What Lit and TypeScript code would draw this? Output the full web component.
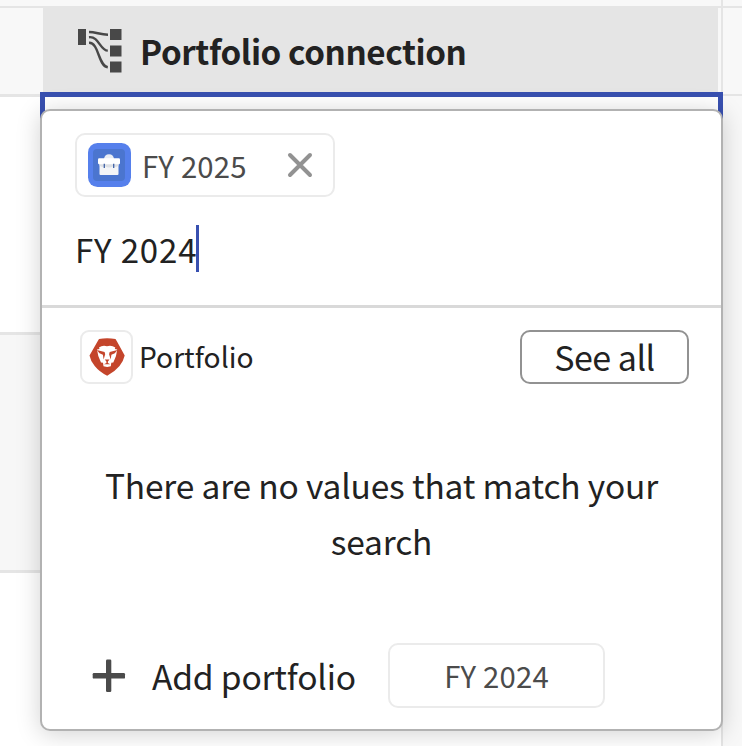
import { LitElement, html, css, svg } from "lit";
import { customElement, property } from "lit/decorators.js";

const connectionIcon = svg`
  <rect x="0" y="1" width="8" height="16"/>
  <rect x="32" y="1" width="11.5" height="11"/>
  <rect x="32" y="17.5" width="11.5" height="11"/>
  <rect x="32" y="33.500" width="11.5" height="11"/>
  <g fill="none" stroke="currentColor" stroke-width="2.4">
    <path d="M11 4C18 4 22 6.7 30 6.7"/>
    <path d="M11 9.2C21 8 22 22.6 29.8 22.6"/>
    <path d="M11 14.8C21 14.3 20 38 29.8 39.3"/>
  </g>`;

@customElement("value-chip")
export class ValueChip extends LitElement {
  @property() label = "";
  @property({ type: Boolean }) removable = false;

  static styles = css`
    :host {
      display: flex;
      box-sizing: border-box;
      align-items: center;
      justify-content: center;
      width: 217px;
      height: 65px;
      border: 2px solid #ebebeb;
      border-radius: 10px;
      color: #4b4b4b;
      background: #fff;
    }
    :host([removable]) {
      width: 260px;
      height: 64px;
      justify-content: flex-start;
      padding-left: 11px;
    }
    .label {
      font-size: 29.3px;
      line-height: 40px;
      letter-spacing: 0.2px;
      margin-bottom: 2px;
      white-space: nowrap;
    }
    :host([removable]) .label { margin-bottom: 1px; }
    .badge { width: 43px; height: 44px; margin-right: 11px; flex: none; }
    .close { width: 26px; height: 26px; margin-left: 40px; flex: none; }
  `;

  render() {
    return html`
      ${this.removable
        ? html`<svg class="badge" viewBox="0 0 43 44">
            <rect width="43" height="44" rx="9.5" fill="#5680ec"/>
            <rect x="5" y="6" width="32" height="32" rx="4" fill="#4b75cf"/>
            <path d="M16 16Q16.500 11.300 21 11.300T26 16Z" fill="#e9edf4"/>
            <rect x="11.500" y="20" width="19" height="12" rx="1" fill="#f4f5f7"/>
            <path d="M11.500 21H30.500V22.500Q28 25 25.500 23Q21 26 16.500 23Q14 25 11.500 22.500Z" fill="#dcdfe4"/>
            <rect x="10" y="15.300" width="22" height="6" rx="1.200" fill="#fff"/>
            <path d="M16.300 20.800V25M25.700 20.800V25" stroke="#3f62a5" stroke-width="1.300"/>
          </svg>`
        : null}
      <span class="label">${this.label}</span>
      ${this.removable
        ? html`<svg class="close" viewBox="0 0 26 26">
            <path d="M3 3L23 23M23 3L3 23" fill="none" stroke="#929292" stroke-width="4" stroke-linecap="round"/>
          </svg>`
        : null}
    `;
  }
}

@customElement("app-root")
export class AppRoot extends LitElement {
  static styles = css`
    :host {
      display: block;
      position: relative;
      width: 742px;
      height: 746px;
      overflow: hidden;
      background: #fff;
      color: #222;
      font-family: "Noto Sans CJK SC", "Noto Sans", sans-serif;
    }
    * { box-sizing: border-box; }
    .table {
      display: grid;
      grid-template-columns: 40px 681px 21px;
      height: 746px;
    }
    .column { display: flex; flex-direction: column; }
    .top { height: 8px; flex: none; background: #f8f8f8; border-bottom: 2px solid #e5e5e5; }
    .head { height: 89px; flex: none; background: #f8f8f8; border-bottom: 3px solid #e5e5e5; }
    .row { height: 238px; flex: none; border-bottom: 3px solid #e5e5e5; }
    .row.alt { background: #f7f7f7; }
    .column.last { background: #f8f8f8; border-left: 2px solid #e5e5e5; }
    .last .head { height: 88px; border-bottom-width: 2px; }
    .title-wrap { height: 84px; flex: none; padding: 0 3px; background: #f8f8f8; }
    .title {
      display: flex;
      align-items: center;
      height: 84px;
      padding-left: 35px;
      background: #e5e5e5;
    }
    .tree { width: 44px; height: 45px; margin-right: 18px; fill: #484848; color: #484848; }
    .title-text {
      padding-top: 2px;
      font-size: 33.2px;
      font-weight: 700;
      line-height: 50px;
      letter-spacing: -0.4px;
      white-space: nowrap;
    }
    .cell-focus {
      position: absolute;
      left: 40px;
      top: 92px;
      width: 683px;
      height: 240px;
      border: 5px solid #3850b0;
    }
    .popover {
      position: absolute;
      left: 40px;
      top: 109px;
      width: 683px;
      height: 622px;
      display: flex;
      flex-direction: column;
      border: 2px solid #b2b2b2;
      border-radius: 10px;
      background: #fff;
      box-shadow: 0 3px 24px rgba(0, 0, 0, 0.18);
    }
    .entry {
      height: 197px;
      flex: none;
      padding: 22px 33px 0;
      border-bottom: 3px solid #d9d9d9;
    }
    .field { display: flex; align-items: center; margin-top: 28px; height: 47px; }
    .typed {
      padding-top: 2px;
      font-size: 33px;
      line-height: 45px;
      letter-spacing: 0.85px;
      white-space: nowrap;
    }
    .caret { width: 3px; height: 47px; margin-left: -1px; background: #3850b0; }
    .source {
      display: flex;
      align-items: center;
      height: 54px;
      margin: 22px 32px 0 38px;
    }
    .logo {
      display: flex;
      align-items: center;
      justify-content: center;
      width: 53px;
      height: 54px;
      border: 2px solid #ebebeb;
      border-radius: 9px;
    }
    .lion { width: 36px; height: 38px; }
    .name {
      margin-left: 6px;
      padding-bottom: 3px;
      font-size: 28.2px;
      line-height: 40px;
      white-space: nowrap;
    }
    .see-all {
      margin-left: auto;
      width: 169px;
      height: 54px;
      padding: 0;
      border: 2px solid #929292;
      border-radius: 10px;
      background: #fff;
      color: #222;
      font: 400 34px/50px "Noto Sans CJK SC", "Noto Sans", sans-serif;
      letter-spacing: -0.5px;
    }
    .empty {
      margin: 73px 40px 0;
      text-align: center;
      font-size: 33.5px;
      line-height: 56px;
      letter-spacing: -0.18px;
    }
    .add { display: flex; align-items: center; height: 65px; margin: 74px 0 0 50px; }
    .plus { width: 34px; height: 34px; fill: #4b4b4b; }
    .add-label {
      width: 236px;
      padding-left: 26px;
      font-size: 33.6px;
      line-height: 50px;
      letter-spacing: -0.2px;
      white-space: nowrap;
    }
    .add value-chip { margin-left: 26px; }
  `;

  render() {
    return html`
      <div class="table">
        <div class="column">
          <div class="top"></div><div class="head"></div>
          <div class="row"></div><div class="row alt"></div>
        </div>
        <div class="column">
          <div class="top"></div>
          <div class="title-wrap">
            <div class="title">
              <svg class="tree" viewBox="0 0 44 45">${connectionIcon}</svg>
              <span class="title-text">Portfolio connection</span>
            </div>
          </div>
        </div>
        <div class="column last">
          <div class="top"></div><div class="head"></div>
        </div>
      </div>
      <div class="cell-focus"></div>
      <div class="popover">
        <div class="entry">
          <value-chip label="FY 2025" removable></value-chip>
          <div class="field"><span class="typed">FY 2024</span><span class="caret"></span></div>
        </div>
        <div class="source">
          <div class="logo">
            <svg class="lion" viewBox="0 0 36 38">
              <path d="M10 .9Q18-.2 26.500 .9L28 3.500L35.700 17.500Q34.500 23 30.500 28Q25.500 34 18.200 37.700Q10.500 34 5.700 28Q1.500 23 .5 17.500L8.500 3.500Z" fill="#c4452b"/>
              <path d="M10 9.500Q13.500 7 18 8.300Q22.500 7 26.300 9.500L25.800 11L28.200 11.500L27 18L24.300 24.500L22.300 24.800L21.800 28.200L18.200 29L14.500 28.200L14 24.800L12 24.500L9.300 18L8 11.500L10.500 11Z" fill="#fff"/>
              <path d="M7.800 12L15.600 14L16.200 16.300L14.600 21.500L13.900 16.700L10.500 15.300ZM28.400 12L20.700 14L20.100 16.300L21.700 21.500L22.400 16.700L25.800 15.300ZM15.800 21.500H20.500L18.900 23.600V25L21.300 26.300H15L17.400 25V23.600Z" fill="#c4452b"/>
            </svg>
          </div>
          <span class="name">Portfolio</span>
          <button class="see-all">See all</button>
        </div>
        <div class="empty">There are no values that match your search</div>
        <div class="add">
          <svg class="plus" viewBox="0 0 34 34">
            <rect x="14" y=".5" width="5.300" height="32.500" rx="1.200"/>
            <rect x=".7" y="14" width="32.300" height="5.600" rx="1.200"/>
          </svg>
          <span class="add-label">Add portfolio</span>
          <value-chip label="FY 2024"></value-chip>
        </div>
      </div>
    `;
  }
}
